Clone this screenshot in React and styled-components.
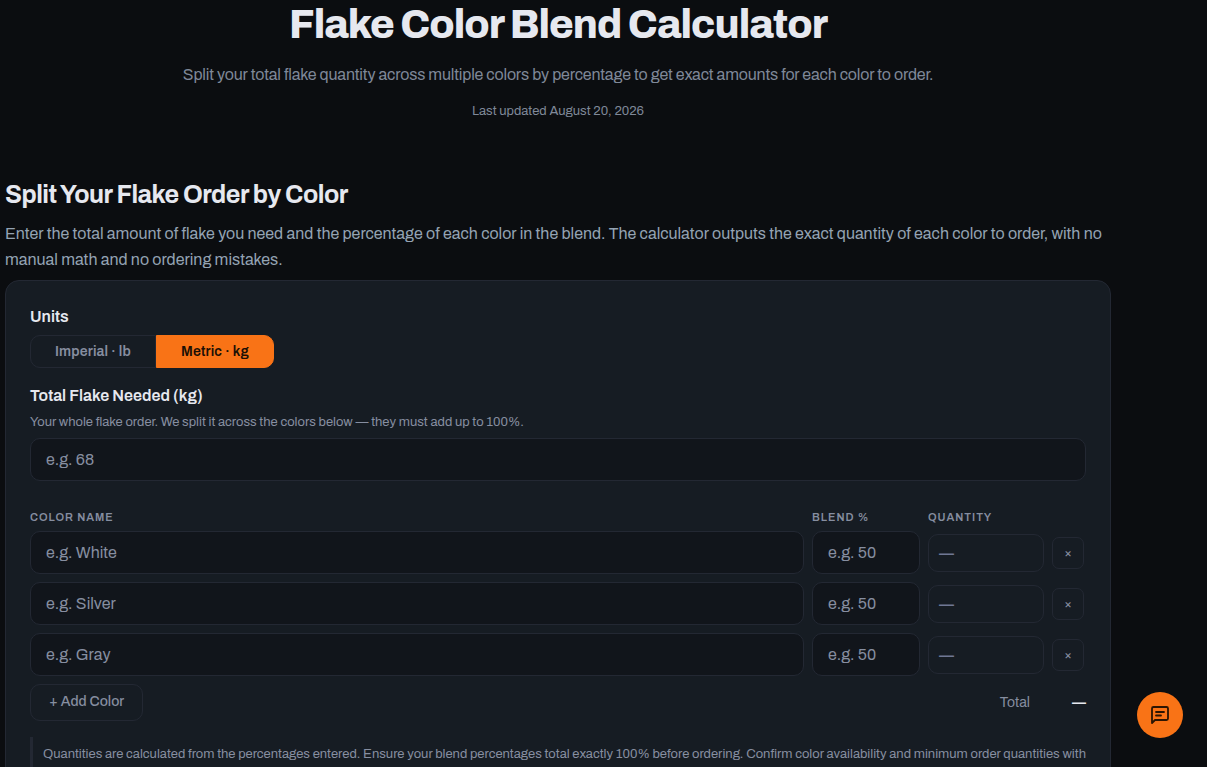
import React, { useState } from 'react';
import styled, { createGlobalStyle } from 'styled-components';

const initialRows = [
  { id: 1, placeholder: 'e.g. White' },
  { id: 2, placeholder: 'e.g. Silver' },
  { id: 3, placeholder: 'e.g. Gray' },
];

const App = () => {
  const [unit, setUnit] = useState('kg');
  const [total, setTotal] = useState('');
  const [rows, setRows] = useState(initialRows);

  const addRow = () => {
    setRows([...rows, { id: Date.now(), placeholder: 'e.g. White' }]);
  };

  const updateRow = (id, field, value) => {
    setRows(rows.map((row) => (row.id === id ? { ...row, [field]: value } : row)));
  };

  const removeRow = (id) => {
    setRows(rows.filter((row) => row.id !== id));
  };

  const getQuantity = (row) => {
    if (!total || !row.percent) return '—';
    return `${((Number(total) * Number(row.percent)) / 100).toFixed(1)} ${unit}`;
  };

  const percentTotal = rows.reduce((sum, row) => sum + Number(row.percent || 0), 0);

  return (
    <Page>
      <GlobalStyle />

      <Hero>
        <Title>Flake Color Blend Calculator</Title>
        <Subtitle>
          Split your total flake quantity across multiple colors by percentage to get exact amounts for each color to order.
        </Subtitle>
        <Updated>Last updated August 20, 2026</Updated>
      </Hero>

      <SectionTitle>Split Your Flake Order by Color</SectionTitle>
      <Intro>
        Enter the total amount of flake you need and the percentage of each color in the blend. The calculator outputs the exact quantity of each color to order, with no manual math and no ordering mistakes.
      </Intro>

      <Card>
        <FieldLabel as="div" id="units-label">Units</FieldLabel>
        <Toggle role="group" aria-labelledby="units-label">
          <ToggleButton type="button" $active={unit === 'lb'} onClick={() => setUnit('lb')}>
            Imperial · lb
          </ToggleButton>
          <ToggleButton type="button" $active={unit === 'kg'} onClick={() => setUnit('kg')}>
            Metric · kg
          </ToggleButton>
        </Toggle>

        <FieldLabel htmlFor="total">Total Flake Needed ({unit})</FieldLabel>
        <Hint>Your whole flake order. We split it across the colors below — they must add up to 100%.</Hint>
        <Input
          id="total"
          type="text"
          value={total}
          onChange={(e) => setTotal(e.target.value)}
          placeholder="e.g. 68"
        />

        <HeaderRow>
          <span id="col-name">Color Name</span>
          <span id="col-blend">Blend %</span>
          <span>Quantity</span>
        </HeaderRow>

        <Rows>
          {rows.map((row) => (
            <Row key={row.id}>
              <Input
                type="text"
                aria-labelledby="col-name"
                value={row.name || ''}
                onChange={(e) => updateRow(row.id, 'name', e.target.value)}
                placeholder={row.placeholder}
              />
              <Input
                type="text"
                aria-labelledby="col-blend"
                value={row.percent || ''}
                onChange={(e) => updateRow(row.id, 'percent', e.target.value)}
                placeholder="e.g. 50"
              />
              <Quantity>{getQuantity(row)}</Quantity>
              <RemoveButton type="button" aria-label="Remove color" onClick={() => removeRow(row.id)}>
                ×
              </RemoveButton>
            </Row>
          ))}
        </Rows>

        <Footer>
          <AddButton type="button" onClick={addRow}>+ Add Color</AddButton>
          <Total>
            <span>Total</span>
            <TotalValue>{percentTotal ? `${percentTotal}%` : '—'}</TotalValue>
          </Total>
        </Footer>

        <Note>
          Quantities are calculated from the percentages entered. Ensure your blend percentages total exactly 100% before ordering. Confirm color availability and minimum order quantities with
        </Note>
      </Card>

      <ChatButton type="button" aria-label="Open chat">
        <svg width="20" height="20" viewBox="0 0 20 20" fill="none" stroke="currentColor" strokeWidth="1.8" strokeLinecap="round" strokeLinejoin="round">
          <path d="M2 18V3.5A1.5 1.5 0 0 1 3.5 2H16.5A1.5 1.5 0 0 1 18 3.5V13.5A1.5 1.5 0 0 1 16.5 15H5Z" />
          <path d="M6 7H14" />
          <path d="M6 10.5H11" />
        </svg>
      </ChatButton>
    </Page>
  );
};

const GlobalStyle = createGlobalStyle`
  * {
    box-sizing: border-box;
  }

  body {
    margin: 0;
    background: #0b0d10;
    color: #e6e8ef;
    font-family: Archivo, 'Liberation Sans', Arial, sans-serif;
  }

  button, input {
    font-family: inherit;
  }
`;

const Page = styled.main`
  padding: 0 96px 0 5px;
`;

const Hero = styled.header`
  text-align: center;
  padding-bottom: 56px;
`;

const Title = styled.h1`
  margin: 0;
  font-size: 40px;
  line-height: 50px;
  font-weight: 800;
  letter-spacing: -1px;
`;

const Subtitle = styled.p`
  margin: 12px 0 0;
  font-size: 16px;
  line-height: 26px;
  letter-spacing: -0.01em;
  color: #7f8898;
`;

const Updated = styled.p`
  margin: 13px 0 0;
  font-size: 13px;
  line-height: 20px;
  color: #7f8898;
`;

const SectionTitle = styled.h2`
  margin: 0;
  font-size: 25px;
  line-height: 36px;
  font-weight: 700;
  letter-spacing: -0.02em;
`;

const Intro = styled.p`
  margin: 8px 0 7px;
  font-size: 16px;
  line-height: 26px;
  color: #94a3b3;
`;

const Card = styled.section`
  padding: 24px 24px 40px;
  background: #161c23;
  border: 1px solid #232833;
  border-radius: 14px;
`;

const FieldLabel = styled.label`
  display: block;
  font-size: 16px;
  line-height: 24px;
  font-weight: 600;
`;

const Toggle = styled.div`
  display: flex;
  height: 33px;
  margin: 6px 0 16px;
`;

const ToggleButton = styled.button`
  padding: 0 24px;
  border: 1px solid ${({ $active }) => ($active ? '#f97316' : '#232833')};
  background: ${({ $active }) => ($active ? '#f97316' : 'transparent')};
  color: ${({ $active }) => ($active ? '#1c1005' : '#868ea0')};
  font-size: 14px;
  font-weight: 600;
  letter-spacing: 0.01em;
  cursor: pointer;

  &:first-child {
    border-radius: 10px 0 0 10px;
  }

  &:last-child {
    border-radius: 0 10px 10px 0;
  }
`;

const Hint = styled.p`
  margin: 4px 0 6px;
  font-size: 13px;
  line-height: 20px;
  color: #868ea0;
`;

const Input = styled.input`
  display: block;
  width: 100%;
  min-width: 0;
  height: 43px;
  padding: 0 15px;
  border: 1px solid #232833;
  border-radius: 10px;
  background: #11151b;
  color: #e6e8ef;
  font-size: 16px;

  &::placeholder {
    color: #868ea0;
    opacity: 1;
  }

  &:focus {
    border-color: #f97316;
    outline: none;
  }
`;

const Row = styled.div`
  display: grid;
  grid-template-columns: minmax(0, 1fr) 108px 116px 34px;
  gap: 8px;
  align-items: center;
`;

const HeaderRow = styled(Row)`
  margin: 28px 0 6px;
  font-size: 11px;
  line-height: 16px;
  font-weight: 600;
  letter-spacing: 1px;
  text-transform: uppercase;
  color: #868ea0;
`;

const Rows = styled.div`
  display: flex;
  flex-direction: column;
  gap: 8px;
`;

const Quantity = styled.output`
  display: flex;
  align-items: center;
  height: 38px;
  padding: 0 10px;
  border: 1px solid #232833;
  border-radius: 10px;
  color: #6f7794;
  font-size: 15px;
  font-weight: 700;
`;

const RemoveButton = styled.button`
  width: 32px;
  height: 32px;
  padding: 0;
  border: 1px solid #232833;
  border-radius: 7px;
  background: transparent;
  color: #868ea0;
  font-size: 13px;
  cursor: pointer;
`;

const Footer = styled.div`
  display: flex;
  align-items: center;
  justify-content: space-between;
  margin-top: 8px;
`;

const AddButton = styled.button`
  height: 37px;
  padding: 0 18px 2px;
  border: 1px solid #232833;
  border-radius: 10px;
  background: transparent;
  color: #868ea0;
  font-size: 14px;
  font-weight: 500;
  cursor: pointer;
`;

const Total = styled.div`
  display: flex;
  align-items: center;
  font-size: 14px;
  color: #868ea0;
`;

const TotalValue = styled.strong`
  min-width: 56px;
  color: #e6e8ef;
  text-align: right;
`;

const Note = styled.p`
  margin: 16px 0 0;
  padding: 6px 0 6px 10px;
  border-left: 3px solid #232833;
  font-size: 13px;
  line-height: 22px;
  color: #868ea0;
`;

const ChatButton = styled.button`
  position: fixed;
  right: 24px;
  bottom: 29px;
  display: flex;
  align-items: center;
  justify-content: center;
  width: 46px;
  height: 46px;
  padding: 0;
  border: 0;
  border-radius: 50%;
  background: #f97316;
  color: #2b1503;
  cursor: pointer;
`;

export default App;
